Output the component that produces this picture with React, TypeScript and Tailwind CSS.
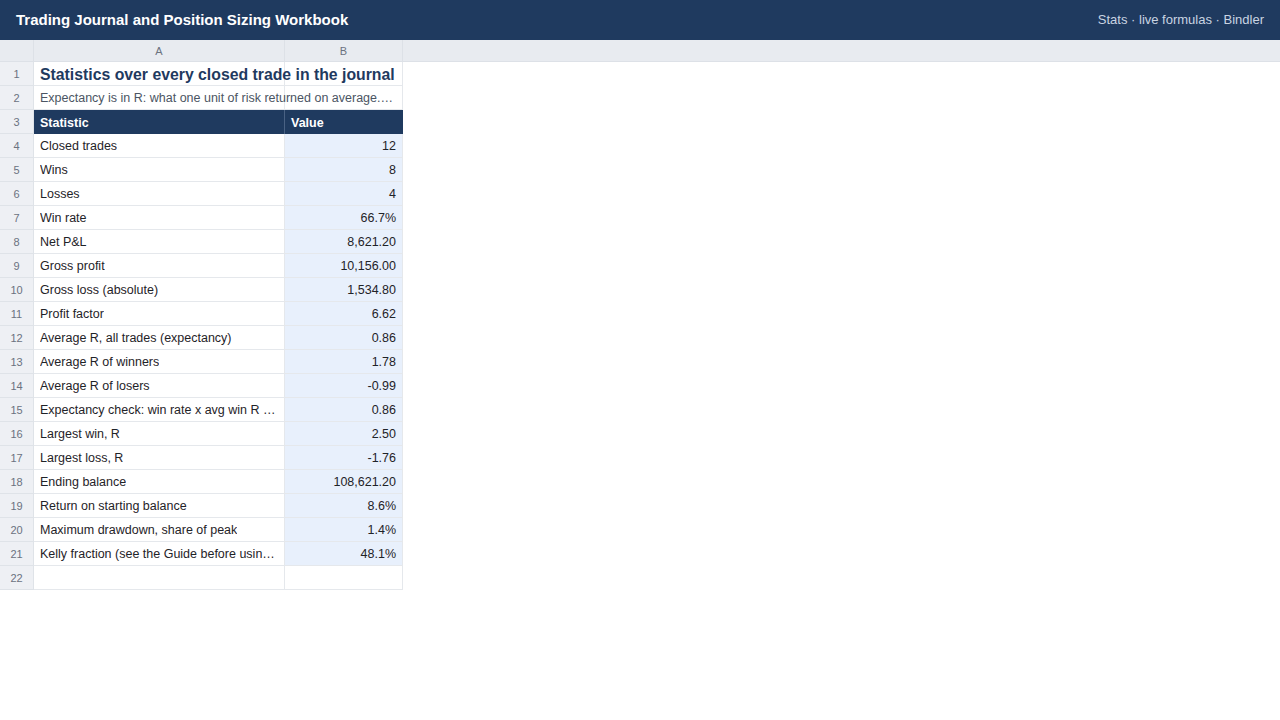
const rows: [string, string][] = [
  ['Closed trades', '12'],
  ['Wins', '8'],
  ['Losses', '4'],
  ['Win rate', '66.7%'],
  ['Net P&L', '8,621.20'],
  ['Gross profit', '10,156.00'],
  ['Gross loss (absolute)', '1,534.80'],
  ['Profit factor', '6.62'],
  ['Average R, all trades (expectancy)', '0.86'],
  ['Average R of winners', '1.78'],
  ['Average R of losers', '-0.99'],
  ['Expectancy check: win rate x avg win R plus loss rate x avg loss R', '0.86'],
  ['Largest win, R', '2.50'],
  ['Largest loss, R', '-1.76'],
  ['Ending balance', '108,621.20'],
  ['Return on starting balance', '8.6%'],
  ['Maximum drawdown, share of peak', '1.4%'],
  ['Kelly fraction (see the Guide before using it)', '48.1%'],
];

function RowNum({ n }: { n: number }) {
  return (
    <div className="w-[34px] shrink-0 flex items-center justify-center pt-px bg-[#eef0f4] border-b border-r border-[#dfe3e8] text-[11px] text-[#6b7280]">
      {n}
    </div>
  );
}

export default function App() {
  return (
    <div className="w-[1280px] h-[720px] bg-white overflow-hidden font-['Liberation_Sans',Arial,sans-serif]">
      {/* Top bar */}
      <div className="h-10 bg-[#1f3a5f] flex items-center justify-between px-4">
        <h1 className="text-white font-bold text-[15px]">Trading Journal and Position Sizing Workbook</h1>
        <span className="text-[13px] text-[#c9d4e2]">Stats · live formulas · Bindler</span>
      </div>

      {/* Column headers */}
      <div className="h-[22px] flex bg-[#e8ebf0] border-b border-[#dde1e7] text-[11px] text-[#6b7280]">
        <div className="w-[34px] border-r border-[#dde1e7]" />
        <div className="w-[251px] border-r border-[#dde1e7] flex items-center justify-center pt-px">A</div>
        <div className="w-[118px] border-r border-[#dde1e7] flex items-center justify-center pt-px">B</div>
      </div>

      <div className="w-[403px]">
        {/* Title row */}
        <div className="h-6 flex">
          <RowNum n={1} />
          <div className="relative w-[369px] border-b border-r border-[#e5e8ec] flex items-center pl-[6px] pr-[5px] overflow-hidden">
            <div className="absolute left-[250px] top-0 bottom-0 border-l border-[#e5e8ec]" />
            <span className="relative top-px text-[15.8px] font-bold text-[#1f3a5f] whitespace-nowrap">
              Statistics over every closed trade in the journal
            </span>
          </div>
        </div>
        <div className="h-6 flex">
          <RowNum n={2} />
          <div className="relative w-[369px] border-b border-r border-[#e5e8ec] flex items-center pl-[6px] pr-[5px] pt-[2px] overflow-hidden">
            <div className="absolute left-[250px] top-0 bottom-0 border-l border-[#e5e8ec]" />
            <span className="relative text-[12.5px] text-[#4b5563] truncate">
              Expectancy is in R: what one unit of risk returned on average.Above zero is an edge.
            </span>
          </div>
        </div>
        {/* Table header */}
        <div className="h-6 flex">
          <RowNum n={3} />
          <div className="w-[251px] bg-[#1f3a5f] border-r border-[#4a6284] flex items-center px-[6px] pt-[2px] text-[12.5px] font-bold text-white">
            Statistic
          </div>
          <div className="w-[118px] bg-[#1f3a5f] flex items-center px-[6px] pt-[2px] text-[12.5px] font-bold text-white">
            Value
          </div>
        </div>
        {rows.map(([label, value], i) => (
          <div key={i} className="h-6 flex">
            <RowNum n={i + 4} />
            <div className="w-[251px] border-b border-r border-[#e5e8ec] flex items-center px-[6px] pt-[2px] text-[12.5px] text-[#1f2328] min-w-0">
              <span className="truncate">{label}</span>
            </div>
            <div className="w-[118px] bg-[#e8f0fc] border-b border-r border-[#e5e8ec] flex items-center justify-end px-[6px] pt-[2px] text-[12.5px] text-[#1f2328]">
              {value}
            </div>
          </div>
        ))}
        <div className="h-6 flex">
          <RowNum n={22} />
          <div className="w-[251px] border-b border-r border-[#e5e8ec]" />
          <div className="w-[118px] border-b border-r border-[#e5e8ec]" />
        </div>
      </div>
    </div>
  );
}
